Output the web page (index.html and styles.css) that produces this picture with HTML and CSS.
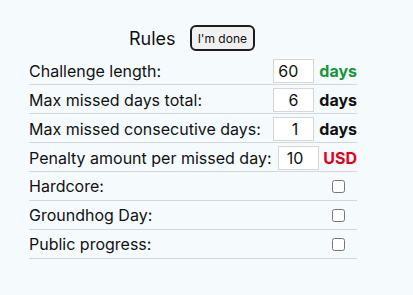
FILE: index.html
```html
<!DOCTYPE html>
<html lang="en">
<head>
    <meta charset="UTF-8">
    <meta name="viewport" content="width=device-width, initial-scale=1.0">
    <title>Rules</title>
    <link rel="stylesheet" href="styles.css">
</head>
<body>

<div class="container">
    <div class="header">
        <span class="title">Rules</span>
        <button class="done-button">I'm done</button>
    </div>

    <div class="field">
        <label for="challenge-length">Challenge length:</label>
        <input type="text" id="challenge-length" value="60">
        <span class="unit green">days</span>
    </div>

    <div class="field">
        <label for="max-missed">Max missed days total:</label>
        <input type="text" id="max-missed" value="6">
        <span class="unit">days</span>
    </div>

    <div class="field">
        <label for="max-consecutive">Max missed consecutive days:</label>
        <input type="text" id="max-consecutive" value="1">
        <span class="unit">days</span>
    </div>

    <div class="field">
        <label for="penalty">Penalty amount per missed day:</label>
        <input type="text" id="penalty" value="10">
        <span class="unit red">USD</span>
    </div>

    <div class="field check">
        <label for="hardcore">Hardcore:</label>
        <span class="check-cell"><input type="checkbox" id="hardcore"></span>
    </div>

    <div class="field check">
        <label for="groundhog">Groundhog Day:</label>
        <span class="check-cell"><input type="checkbox" id="groundhog"></span>
    </div>

    <div class="field check">
        <label for="public-progress">Public progress:</label>
        <span class="check-cell"><input type="checkbox" id="public-progress"></span>
    </div>
</div>

</body>
</html>
```

FILE: styles.css
```css
body {
    font-family: Inter, "Noto Sans", sans-serif;
    margin: 0;
    background: #f5fbfd;
    color: #111;
}
.container {
    width: 328px;
    margin: 25px 0 0 29px;
}
.header {
    display: flex;
    justify-content: center;
    align-items: center;
    gap: 14px;
    margin-bottom: 5px;
    padding-right: 2px;
}
.title {
    font-size: 18px;
}
.done-button {
    font-family: Inter, "Noto Sans", sans-serif;
    font-size: 12px;
    color: #111;
    height: 26px;
    padding: 0 6px;
    border: 2px solid #1c1c1c;
    border-radius: 6px;
    background: #f0f0f0;
}
.field {
    display: flex;
    align-items: baseline;
    height: 29px;
    padding-top: 3px;
    box-sizing: border-box;
    border-bottom: 1px solid #d3d7db;
    font-size: 16px;
}
.field label {
    flex: 1;
}
.field input[type="text"] {
    width: 41px;
    height: 24px;
    padding: 0 15px 0 2px;
    border: 1px solid #d6d6d6;
    box-sizing: border-box;
    font-family: Inter, "Noto Sans", sans-serif;
    font-size: 16px;
    color: #111;
    text-align: right;
    background: #fff;
}
.unit {
    margin-left: 5px;
    font-weight: bold;
}
.unit.green {
    color: #17963a;
}
.unit.red {
    color: #e3001b;
    margin-left: 4px;
}
.field.check {
    align-items: center;
    padding-top: 0;
}
.check-cell {
    width: 37px;
    text-align: center;
}
.check-cell input {
    margin: 4px 0 0 0;
    width: 13px;
    height: 13px;
}
```
